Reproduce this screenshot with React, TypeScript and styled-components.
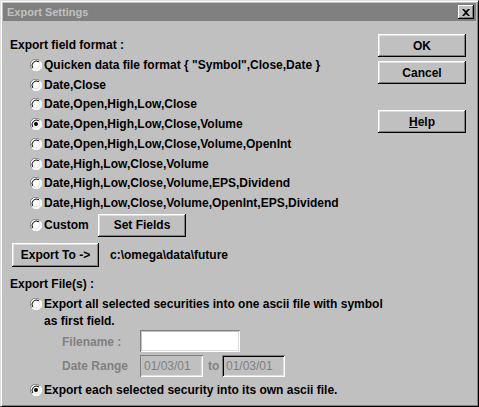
import React from "react";
import styled, { createGlobalStyle } from "styled-components";

const Global = createGlobalStyle`
  html, body { margin: 0; padding: 0; background: #c0c0c0; }
  * { box-sizing: border-box; }
`;

const FONT = `"Liberation Sans", Arial, sans-serif`;

const Window = styled.div`
  width: 479px;
  height: 407px;
  background: #c0c0c0;
  border-top: 1px solid #dfdfdf;
  border-left: 1px solid #dfdfdf;
  border-right: 1px solid #000;
  border-bottom: 1px solid #000;
  box-shadow: inset 1px 1px 0 #fff, inset -1px -1px 0 #808080;
  padding: 2px;
  display: flex;
  flex-direction: column;
  font-family: ${FONT};
  font-weight: bold;
  font-size: 12px;
  color: #000;
`;

const TitleBar = styled.div`
  height: 18px;
  flex: none;
  background: #808080;
  display: flex;
  align-items: center;
  justify-content: space-between;
  padding: 0 2px 0 4px;
`;

const Title = styled.span`
  color: #c0c0c0;
  font-size: 11px;
  font-weight: bold;
`;

const CloseBtn = styled.div`
  width: 16px;
  height: 14px;
  background: #c0c0c0;
  box-shadow: inset -1px -1px 0 #000, inset 1px 1px 0 #fff, inset -2px -2px 0 #808080;
  display: flex;
  align-items: center;
  justify-content: center;
`;

const Body = styled.div`
  flex: 1;
  display: grid;
  grid-template-columns: minmax(0, 1fr) 88px;
  padding: 13px 10px 0 7px;
`;

const LeftCol = styled.div`
  display: flex;
  flex-direction: column;
  padding-top: 2px;
  min-width: 0;
`;

const RightCol = styled.div`
  display: flex;
  flex-direction: column;
  gap: 4px;
`;

const Heading = styled.div<{ $top?: number }>`
  height: 19px;
  line-height: 19px;
  margin-top: ${(p) => p.$top ?? 0}px;
`;

const RadioRow = styled.div<{ $h?: number }>`
  display: flex;
  align-items: center;
  height: ${(p) => p.$h ?? 20}px;
  padding-left: 20px;
  gap: 2px;
  white-space: nowrap;
`;

const CustomLabel = styled.span`
  width: 52px;
`;

const Button = styled.div<{ $w?: number; $h?: number; $top?: number }>`
  width: ${(p) => p.$w ?? 88}px;
  height: ${(p) => p.$h ?? 23}px;
  margin-top: ${(p) => p.$top ?? 0}px;
  flex: none;
  background: #c0c0c0;
  box-shadow: inset -1px -1px 0 #000, inset 1px 1px 0 #fff, inset -2px -2px 0 #808080, inset 2px 2px 0 #dfdfdf;
  display: flex;
  align-items: center;
  justify-content: center;
  font-size: 12px;
  font-weight: bold;
`;

const ExportRow = styled.div`
  display: flex;
  align-items: center;
  gap: 11px;
  margin-top: 6px;
  padding-left: 2px;
  height: 24px;
`;

const Line = styled.div`
  height: 15px;
  line-height: 15px;
  padding-left: 34px;
`;

const FieldRow = styled.div<{ $h: number }>`
  display: flex;
  align-items: flex-end;
  height: ${(p) => p.$h}px;
  padding-left: 52px;
`;

const Label = styled.span<{ $w?: number }>`
  width: ${(p) => (p.$w ? `${p.$w}px` : "auto")};
  color: #808080;
  line-height: 20px;
  align-self: center;
  margin-top: 2px;
`;

const Input = styled.div<{ $w: number; $disabled?: boolean; $dark?: boolean }>`
  width: ${(p) => p.$w}px;
  height: 22px;
  background: ${(p) => (p.$disabled ? "#c0c0c0" : "#fff")};
  box-shadow: ${(p) =>
    p.$dark
      ? "inset 1px 1px 0 #808080, inset -1px -1px 0 #fff, inset 2px 2px 0 #000, inset -2px -2px 0 #dfdfdf"
      : "inset 1px 1px 0 #808080, inset -1px -1px 0 #fff, inset 2px 2px 0 #c0c0c0, inset -2px -2px 0 #dfdfdf"};
  color: #808080;
  display: flex;
  align-items: center;
  padding-left: 4px;
  font-weight: normal;
  font-size: 12px;
`;

const To = styled.span`
  color: #808080;
  width: 19px;
  padding-left: 5px;
  line-height: 20px;
  align-self: center;
  margin-top: 2px;
`;

const Underline = styled.span`
  text-decoration: underline;
`;

function Radio({ checked }: { checked?: boolean }) {
  return (
    <svg width="12" height="12" viewBox="0 0 12 12" style={{ flex: "none" }}>
      <circle cx="6" cy="6" r="5.5" fill="#fff" />
      <path d="M1.8 9.6 A5.5 5.5 0 0 1 9.6 1.8" fill="none" stroke="#808080" />
      <path d="M10.2 2.4 A5.5 5.5 0 0 1 2.4 10.2" fill="none" stroke="#fff" />
      <path d="M2.7 8.9 A4.5 4.5 0 0 1 8.9 2.7" fill="none" stroke="#000" />
      <path d="M9.3 3.1 A4.5 4.5 0 0 1 3.1 9.3" fill="none" stroke="#dfdfdf" />
      {checked && <circle cx="6" cy="6" r="2" fill="#000" />}
    </svg>
  );
}

const formats = [
  'Quicken data file format { "Symbol",Close,Date }',
  "Date,Close",
  "Date,Open,High,Low,Close",
  "Date,Open,High,Low,Close,Volume",
  "Date,Open,High,Low,Close,Volume,OpenInt",
  "Date,High,Low,Close,Volume",
  "Date,High,Low,Close,Volume,EPS,Dividend",
  "Date,High,Low,Close,Volume,OpenInt,EPS,Dividend",
];

export default function App() {
  return (
    <>
      <Global />
      <Window>
        <TitleBar>
          <Title>Export Settings</Title>
          <CloseBtn>
            <svg width="8" height="7" viewBox="0 0 8 7">
              <path d="M0 0h2l2 2 2-2h2L5 3.5 8 7H6L4 5 2 7H0l3-3.5z" fill="#000" />
            </svg>
          </CloseBtn>
        </TitleBar>
        <Body>
          <LeftCol>
            <Heading>Export field format :</Heading>
            {formats.map((f, i) => (
              <RadioRow key={f} $h={19.75}>
                <Radio checked={i === 3} />
                <span>{f}</span>
              </RadioRow>
            ))}
            <RadioRow $h={24}>
              <Radio />
              <CustomLabel>Custom</CustomLabel>
              <Button $w={88} $h={23}>Set Fields</Button>
            </RadioRow>
            <ExportRow>
              <Button $w={87} $h={24}>Export To -&gt;</Button>
              <span>c:\omega\data\future</span>
            </ExportRow>
            <Heading $top={8}>Export File(s) :</Heading>
            <RadioRow $h={20}>
              <Radio />
              <span>Export all selected securities into one ascii file with symbol</span>
            </RadioRow>
            <Line>as first field.</Line>
            <FieldRow $h={23}>
              <Label $w={78}>Filename :</Label>
              <Input $w={100} />
            </FieldRow>
            <FieldRow $h={25}>
              <Label $w={78}>Date Range</Label>
              <Input $w={63} $disabled>01/03/01</Input>
              <To>to</To>
              <Input $w={63} $disabled $dark>01/03/01</Input>
            </FieldRow>
            <RadioRow $h={26}>
              <Radio checked />
              <span>Export each selected security into its own ascii file.</span>
            </RadioRow>
          </LeftCol>
          <RightCol>
            <Button>OK</Button>
            <Button>Cancel</Button>
            <Button $top={22}>
              <Underline>H</Underline>elp
            </Button>
          </RightCol>
        </Body>
      </Window>
    </>
  );
}
